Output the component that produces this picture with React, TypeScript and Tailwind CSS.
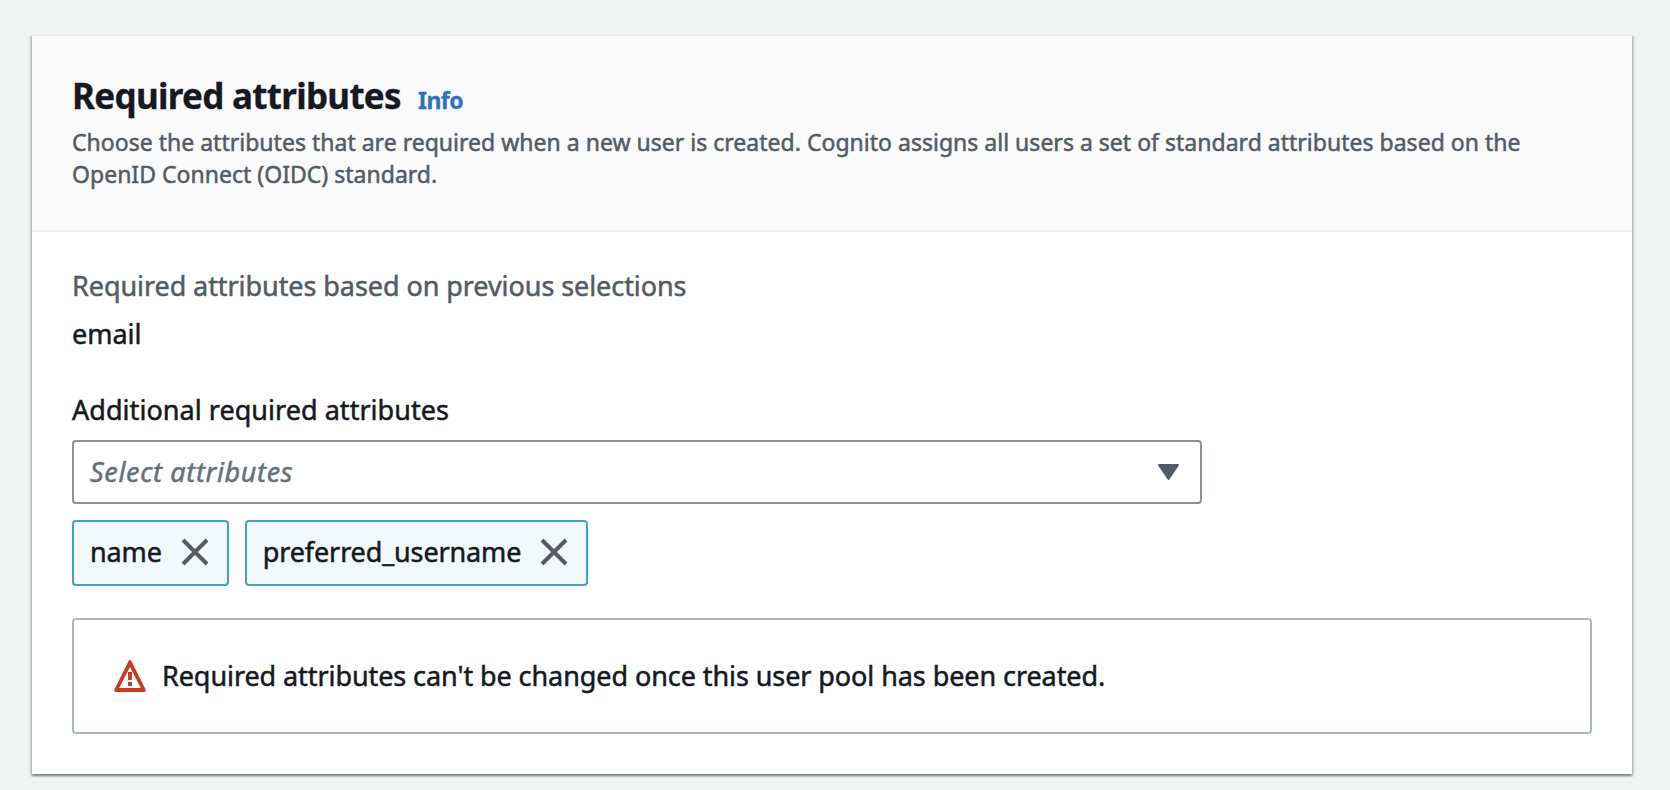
import type { ReactNode } from 'react';

function CloseIcon() {
  return (
    <svg className="h-8 w-8 shrink-0" viewBox="0 0 32 32" fill="none" stroke="#545b64" strokeWidth="4">
      <path d="M4 4l24 24M28 4L4 28" />
    </svg>
  );
}

function WarningIcon() {
  return (
    <svg className="h-8 w-8 shrink-0" viewBox="0 0 32 32" fill="#c33d22">
      <path
        fillRule="evenodd"
        d="M14.6 1Q16-1 17.4 1L31.6 29.4Q32.2 32 30 32H2Q-.2 32 .4 29.4L14.6 1zM16 7L5.2 28H26.8L16 7z"
      />
      <path d="M14 12h4v8h-4zM14 22h4v4h-4z" />
    </svg>
  );
}

function Token({ children }: { children: ReactNode }) {
  return (
    <div className="flex h-[66px] items-center rounded-[4px] border-2 border-[#44a0c8] bg-[#f2f9fd] pl-4 pr-4 pb-[2px] tracking-[-0.13px]">
      <span>{children}</span>
      <button className="ml-[17px] flex" aria-label="Remove">
        <CloseIcon />
      </button>
    </div>
  );
}

export default function App() {
  return (
    <div className="h-[790px] overflow-hidden bg-[#f2f3f3] px-8 pt-[34px] font-['Noto_Sans',sans-serif] text-[27px] leading-[44px] text-[#16191f] [-webkit-text-stroke:0.5px]">
      <section className="h-[740px] w-[1600px] border-t-2 border-[#eaeded] bg-white shadow-[0_2px_2px_0_rgba(0,28,36,0.35),2px_2px_2px_0_rgba(0,28,36,0.15),-2px_2px_2px_0_rgba(0,28,36,0.15)]">
        <header className="h-[196px] border-b-2 border-[#eaeded] bg-[#fafafa] px-10 pt-[38px]">
          <div className="flex items-baseline [-webkit-text-stroke:0.3px]">
            <h2 className="text-[35px] font-bold tracking-[-0.7px]">Required attributes</h2>
            <a className="ml-[17px] text-[23px] font-bold tracking-[-0.5px] text-[#2e73b8]">Info</a>
          </div>
          <p className="mt-1 text-[23px] leading-8 tracking-[0.015px] text-[#545b64]">
            Choose the attributes that are required when a new user is created. Cognito assigns all users a set of standard attributes based on the OpenID Connect (OIDC) standard.
          </p>
        </header>
        <div className="px-10 pt-8">
          <div className="tracking-[-0.07px] text-[#545b64]">Required attributes based on previous selections</div>
          <div className="mt-1">email</div>
          <div className="mt-8 tracking-[0.04px]">Additional required attributes</div>
          <div className="mt-2 flex h-16 w-[1130px] items-center justify-between rounded-[4px] border-2 border-[#879596] pl-4 pr-[21px]">
            <span className="tracking-[0.65px] text-[#687078] italic">Select attributes</span>
            <svg className="h-4 w-[21px]" viewBox="0 0 21 16" fill="#545b64" stroke="#545b64" strokeWidth="2" strokeLinejoin="round">
              <path d="M1 1h19L10.5 15z" />
            </svg>
          </div>
          <div className="mt-4 flex gap-4">
            <Token>name</Token>
            <Token>preferred_username</Token>
          </div>
          <div className="mt-8 flex h-[116px] items-center rounded-[4px] border-2 border-[#aab7b8] pl-10">
            <WarningIcon />
            <span className="ml-4 tracking-[-0.08px]">Required attributes can't be changed once this user pool has been created.</span>
          </div>
        </div>
      </section>
    </div>
  );
}
